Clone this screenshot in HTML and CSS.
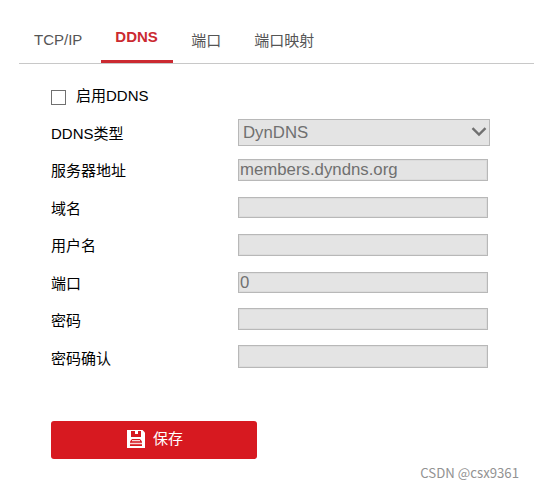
FILE: index.html
```html
<!DOCTYPE html>
<html lang="zh-CN">
<head>
    <meta charset="UTF-8">
    <meta name="viewport" content="width=device-width, initial-scale=1.0">
    <title>DDNS</title>
    <link rel="stylesheet" href="styles.css">
</head>
<body>
    <div class="tabs">
        <a class="tab">TCP/IP</a>
        <a class="tab active">DDNS</a>
        <a class="tab">端口</a>
        <a class="tab last">端口映射</a>
    </div>

    <form class="form">
        <div class="check-row">
            <input type="checkbox" id="enable" class="checkbox">
            <label for="enable">启用DDNS</label>
        </div>
        <div class="row">
            <label for="type">DDNS类型</label>
            <div class="select-wrap">
                <select id="type" class="select" disabled>
                    <option>DynDNS</option>
                </select>
                <svg class="arrow" width="16" height="12" viewBox="0 0 16 12">
                    <path d="M1.500 2.200L8 8.600l6.500-6.400" fill="none" stroke="#707070" stroke-width="2.400"/>
                </svg>
            </div>
        </div>
        <div class="row">
            <label for="server">服务器地址</label>
            <input type="text" id="server" class="text" value="members.dyndns.org" disabled>
        </div>
        <div class="row">
            <label for="domain">域名</label>
            <input type="text" id="domain" class="text short" disabled>
        </div>
        <div class="row">
            <label for="user">用户名</label>
            <input type="text" id="user" class="text" disabled>
        </div>
        <div class="row">
            <label for="port">端口</label>
            <input type="text" id="port" class="text short" value="0" disabled>
        </div>
        <div class="row">
            <label for="password">密码</label>
            <input type="password" id="password" class="text raised" disabled>
        </div>
        <div class="row">
            <label for="confirm">密码确认</label>
            <input type="password" id="confirm" class="text tall" disabled>
        </div>

        <button type="button" class="save">
            <svg width="18" height="18" viewBox="0 0 18 18">
                <path d="M0 0h15.500L18 2.500V18H0z" fill="#fff"/>
                <path d="M4 1h4v3h3V1h3v6H4z" fill="#d71920"/>
                <path d="M5 9h8l2 2.500V16H3v-4.500z" fill="#d71920"/>
                <path d="M5 10.700h8M3 13.500h12" fill="none" stroke="#f8d4d5" stroke-width="1.300"/>
            </svg>
            <span>保存</span>
        </button>
    </form>

    <div class="watermark">CSDN @csx9361</div>
</body>
</html>
```
FILE: styles.css
```css
* { box-sizing: border-box; }
body { margin: 0; height: 488px; background: #fff; color: #000; font: 15px/20px "Liberation Sans", "Noto Sans CJK SC", sans-serif; overflow: hidden; }
.tabs { display: flex; height: 64px; margin-left: 19px; padding-top: 17px; border-bottom: 1px solid #c8c8c8; }
.tab { height: 46px; padding: 14px 15px 0; color: #555; }
.tab:first-child { padding-top: 13px; }
.tab.active { margin: 0 3px 0 4px; padding: 10px 14px 0; width: 72px; border-bottom: 3px solid #cb2a31; color: #cb2a31; font-weight: bold; }
.tab.last { margin-left: 3px; }
.form { padding: 22px 0 0 51px; }
.check-row { display: flex; align-items: center; gap: 10px; height: 20px; margin-bottom: 8px; }
.checkbox { appearance: none; width: 15px; height: 15px; margin: 3px 0 0; border: 1px solid #707070; background: #fff; }
.row { display: grid; grid-template-columns: 187px 252px; align-items: center; height: 37.5px; }
.row label { padding-top: 2px; }
.select-wrap { position: relative; height: 27px; }
.select { appearance: none; width: 252px; height: 27px; padding: 0 4px; border: 1px solid #b8b8b8; border-radius: 0; background: #e4e4e4; color: #707070; opacity: 1; font: 16.8px "Liberation Sans", sans-serif; }
.arrow { position: absolute; right: 3px; top: 7px; }
.text { width: 250px; height: 22px; padding: 0 1px; border: 1px solid #b8b8b8; background: #e4e4e4; color: #707070; font: 16.8px "Liberation Sans", sans-serif; box-shadow: inset 0 0 0 1px #dcdcdc; }
.short { height: 21px; }
.raised { margin-bottom: 2px; }
.tall { height: 23px; margin-bottom: 2px; }
.save { display: flex; align-items: center; justify-content: center; gap: 8px; width: 206px; height: 38px; margin-top: 44px; padding: 0 0 1px 2px; border: 0; border-radius: 3px; background: #d71920; color: #fff; font: 15px/20px "Liberation Sans", "Noto Sans CJK SC", sans-serif; }
.watermark { position: absolute; right: 15px; bottom: 5px; color: #929292; font: 13.2px/20px "Noto Sans CJK SC", sans-serif; }
```
